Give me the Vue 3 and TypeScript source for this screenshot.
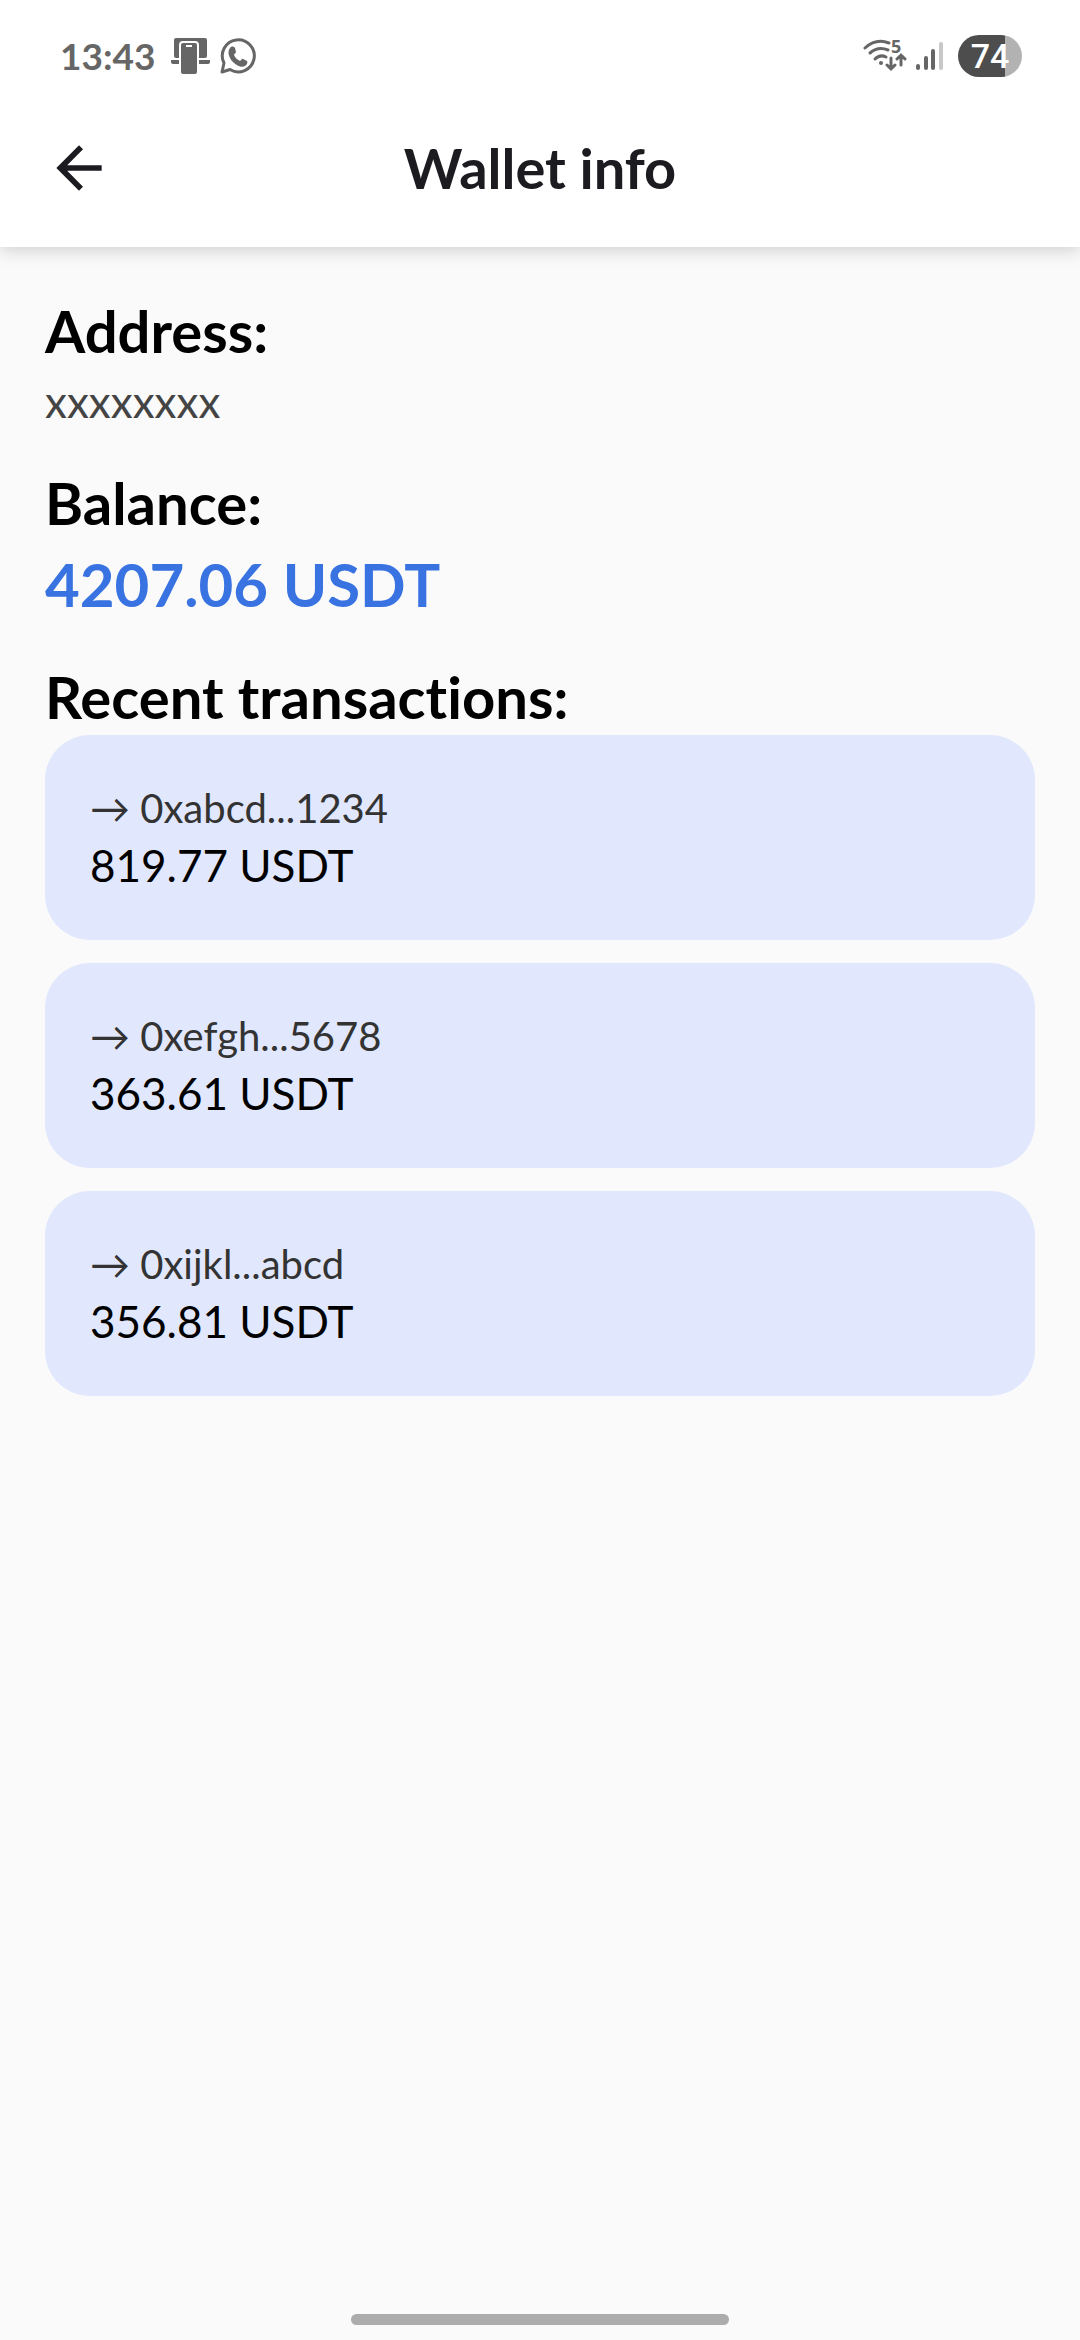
<script setup lang="ts">
interface Transaction {
  recipient: string
  amount: string
}

const address = 'xxxxxxxx'
const balance = '4207.06 USDT'
const batteryLevel = 74

const transactions: Transaction[] = [
  { recipient: '0xabcd...1234', amount: '819.77 USDT' },
  { recipient: '0xefgh...5678', amount: '363.61 USDT' },
  { recipient: '0xijkl...abcd', amount: '356.81 USDT' },
]
</script>

<template>
  <div class="screen">
    <div class="top">
      <div class="status-bar">
        <div class="status-left">
          <span class="clock">13:43</span>
          <svg width="40" height="38" viewBox="0 0 40 38" aria-hidden="true">
            <rect x="3" y="1" width="33" height="20" rx="2" fill="#666" />
            <path fill="#666" d="M0 23h39v2q0 2-2 2H2q-2 0-2-2z" />
            <path fill="#fff" d="M8 38V8q0-4 4-4h12q4 0 4 4v30z" />
            <path fill="#666" fill-rule="evenodd" d="M12 6h12q2 0 2 2v27q0 2-2 2H12q-2 0-2-2V8q0-2 2-2zM15 8v2h6V8z" />
          </svg>
          <svg class="whatsapp" width="38" height="38" viewBox="0 0 38 38" aria-hidden="true">
            <path fill="none" stroke="#666" stroke-width="3" stroke-linejoin="round" d="M3 35l2-9a16 16 0 1 1 6 6.500z" />
            <path fill="#666" d="M11 11c1-2 4-2 5 0l1 4c0 1-2 2-2 3 1 3 4 5 6 6 1 0 2-3 3-2l4 2c1 1 0 4-2 5-3 2-8 0-12-4-4-4-6-10-3-14z" />
          </svg>
        </div>
        <div class="status-right">
          <svg width="44" height="50" viewBox="0 -8 44 50" aria-hidden="true">
            <g fill="none" stroke="#666" stroke-width="3" stroke-linecap="round">
              <path d="M2 9Q13-1 26 4" />
              <path d="M7 14Q15 7 25 11" />
              <path d="M12 20q5-5 11-2" />
              <path d="M28 19v10M24 26l4 4 4-4M38 26V16M34 20l4-4 4 4" />
            </g>
            <circle cx="18" cy="24" r="2" fill="#666" />
            <text class="band" x="28" y="14">5</text>
          </svg>
          <svg class="signal" width="28" height="30" viewBox="0 0 28 30" aria-hidden="true">
            <g stroke="#666" stroke-width="4" stroke-linecap="round">
              <path d="M2 25v2M10 17v10M17 10v17" />
              <path d="M25 3v24" stroke="#c8c8c8" />
            </g>
          </svg>
          <span
            class="battery"
            :style="{ backgroundImage: `linear-gradient(90deg, #4d4d4d ${batteryLevel}%, #b2b2b2 ${batteryLevel}%)` }"
          >{{ batteryLevel }}</span>
        </div>
      </div>

      <header class="app-bar">
        <button class="back" type="button" aria-label="Back">
          <svg width="68" height="68" viewBox="0 0 24 24" aria-hidden="true">
            <path fill="#1c1b1f" d="M20 11H7.830l5.590-5.590L12 4l-8 8 8 8 1.410-1.410L7.830 13H20v-2z" />
          </svg>
        </button>
        <h1 class="title">Wallet info</h1>
      </header>
    </div>

    <main class="content">
      <section class="block">
        <h2>Address:</h2>
        <p class="address">{{ address }}</p>
      </section>

      <section class="block">
        <h2>Balance:</h2>
        <p class="balance">{{ balance }}</p>
      </section>

      <section>
        <h2>Recent transactions:</h2>
        <ul class="list">
          <li v-for="tx in transactions" :key="tx.recipient" class="card">
            <p class="recipient">→ {{ tx.recipient }}</p>
            <p class="amount">{{ tx.amount }}</p>
          </li>
        </ul>
      </section>
    </main>

    <div class="home-indicator"></div>
  </div>
</template>

<style>
body {
  margin: 0;
  background: #fafafa;
}
</style>

<style scoped>
.screen {
  display: flex;
  flex-direction: column;
  min-height: 100vh;
  background: #fafafa;
  color: #000;
  font-family: Lato, "Noto Sans", sans-serif;
  font-variant-ligatures: none;
}

h1,
h2,
p,
ul {
  margin: 0;
  padding: 0;
  font-weight: 400;
}

.top {
  background: #fff;
  box-shadow: 0 2px 18px rgba(0, 0, 0, 0.2);
}

.status-bar {
  display: flex;
  align-items: center;
  justify-content: space-between;
  height: 112px;
  padding: 0 58px 0 60px;
}

.status-left,
.status-right {
  display: flex;
  align-items: center;
}

.whatsapp {
  margin-left: 8px;
}

.clock {
  margin-right: 16px;
  color: #666;
  font-size: 37px;
  line-height: 56px;
  font-weight: 700;
}

.signal {
  margin: 0 14px 0 9px;
}

.band {
  fill: #666;
  font: 700 18px "Noto Sans", sans-serif;
}

.battery {
  width: 64px;
  height: 42px;
  border-radius: 21px;
  color: #fff;
  font: 500 34px/42px Roboto, sans-serif;
  text-align: center;
}

.app-bar {
  display: grid;
  grid-template-columns: 1fr auto 1fr;
  align-items: center;
  padding: 0 45px 23px;
}

.back {
  display: flex;
  align-items: center;
  justify-self: start;
  height: 112px;
  padding: 0;
  border: 0;
  background: none;
}

.title {
  color: #1c1b1f;
  font-size: 56px;
  line-height: 112px;
  font-weight: 700;
}

.content {
  flex: 1;
  padding: 46px 45px;
}

.block {
  margin-bottom: 32px;
}

h2 {
  font-size: 58px;
  line-height: 76px;
  font-weight: 700;
}

.address {
  color: #444;
  font-size: 44px;
  line-height: 64px;
}

.balance {
  color: #3973e1;
  font-size: 60px;
  line-height: 86px;
  font-weight: 700;
}

.list {
  display: flex;
  flex-direction: column;
  gap: 23px;
  list-style: none;
}

.card {
  padding: 45px;
  border-radius: 45px;
  background: #e1e7fd;
}

.recipient {
  color: #333;
  font-size: 40px;
  line-height: 56px;
}

.amount {
  font-size: 44px;
  line-height: 59px;
}

.home-indicator {
  align-self: center;
  width: 35%;
  height: 11px;
  margin-bottom: 15px;
  border-radius: 6px;
  background: #acacac;
}
</style>
